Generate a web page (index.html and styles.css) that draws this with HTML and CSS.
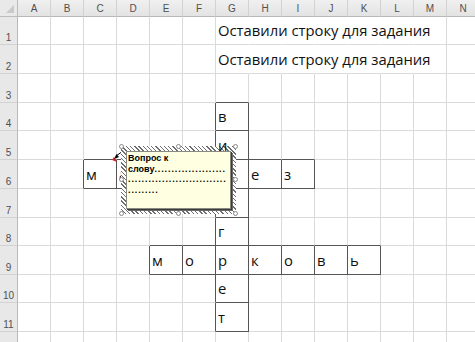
FILE: index.html
```html
<!DOCTYPE html>
<html lang="ru">
<head>
<meta charset="utf-8">
<title>Кроссворд</title>
<link rel="stylesheet" href="styles.css">
</head>
<body>
<div class="sheet">
  <div class="grid">
    <!-- header row -->
    <div class="corner"><span class="tri"></span></div>
    <div class="ch">A</div><div class="ch">B</div><div class="ch">C</div><div class="ch">D</div><div class="ch">E</div><div class="ch">F</div><div class="ch">G</div><div class="ch">H</div><div class="ch">I</div><div class="ch">J</div><div class="ch">K</div><div class="ch">L</div><div class="ch">M</div><div class="ch">N</div>

    <!-- row 1 -->
    <div class="rh">1</div>
    <div class="c"></div><div class="c"></div><div class="c"></div><div class="c"></div><div class="c"></div><div class="c"></div>
    <div class="c over">Оставили строку для задания</div><div class="c nol"></div><div class="c nol"></div><div class="c nol"></div><div class="c nol"></div><div class="c nol"></div><div class="c"></div><div class="c"></div>

    <!-- row 2 -->
    <div class="rh">2</div>
    <div class="c"></div><div class="c"></div><div class="c"></div><div class="c"></div><div class="c"></div><div class="c"></div>
    <div class="c over">Оставили строку для задания</div><div class="c nol"></div><div class="c nol"></div><div class="c nol"></div><div class="c nol"></div><div class="c nol"></div><div class="c"></div><div class="c"></div>

    <!-- row 3 -->
    <div class="rh">3</div>
    <div class="c"></div><div class="c"></div><div class="c"></div><div class="c"></div><div class="c"></div><div class="c"></div>
    <div class="c b"></div><div class="c"></div><div class="c"></div><div class="c"></div><div class="c"></div><div class="c"></div><div class="c"></div><div class="c"></div>

    <!-- row 4 -->
    <div class="rh">4</div>
    <div class="c"></div><div class="c"></div><div class="c"></div><div class="c"></div><div class="c"></div><div class="c r"></div>
    <div class="c r b">в</div><div class="c"></div><div class="c"></div><div class="c"></div><div class="c"></div><div class="c"></div><div class="c"></div><div class="c"></div>

    <!-- row 5 -->
    <div class="rh">5</div>
    <div class="c"></div><div class="c"></div><div class="c b"></div><div class="c b"></div><div class="c b"></div><div class="c r b"></div>
    <div class="c r b top"><span class="lift">и</span></div><div class="c b"></div><div class="c b"></div><div class="c"></div><div class="c"></div><div class="c"></div><div class="c"></div><div class="c"></div>

    <!-- row 6 (cells E6..G6 are hidden under the comment) -->
    <div class="rh">6</div>
    <div class="c"></div><div class="c r"></div><div class="c r b">м</div><div class="c r b">а</div><div class="c r b"></div><div class="c r b"></div>
    <div class="c r b"></div><div class="c r b">е</div><div class="c r b">з</div><div class="c"></div><div class="c"></div><div class="c"></div><div class="c"></div><div class="c"></div>

    <!-- row 7 -->
    <div class="rh">7</div>
    <div class="c"></div><div class="c"></div><div class="c"></div><div class="c"></div><div class="c"></div><div class="c r"></div>
    <div class="c r b"></div><div class="c"></div><div class="c"></div><div class="c"></div><div class="c"></div><div class="c"></div><div class="c"></div><div class="c"></div>

    <!-- row 8 -->
    <div class="rh">8</div>
    <div class="c"></div><div class="c"></div><div class="c"></div><div class="c"></div><div class="c b"></div><div class="c r b"></div>
    <div class="c r b">г</div><div class="c b"></div><div class="c b"></div><div class="c b"></div><div class="c b"></div><div class="c"></div><div class="c"></div><div class="c"></div>

    <!-- row 9 -->
    <div class="rh">9</div>
    <div class="c"></div><div class="c"></div><div class="c"></div><div class="c r"></div><div class="c r b">м</div><div class="c r b">о</div>
    <div class="c r b">р</div><div class="c r b">к</div><div class="c r b">о</div><div class="c r b">в</div><div class="c r b">ь</div><div class="c"></div><div class="c"></div><div class="c"></div>

    <!-- row 10 -->
    <div class="rh">10</div>
    <div class="c"></div><div class="c"></div><div class="c"></div><div class="c"></div><div class="c"></div><div class="c r"></div>
    <div class="c r b">е</div><div class="c"></div><div class="c"></div><div class="c"></div><div class="c"></div><div class="c"></div><div class="c"></div><div class="c"></div>

    <!-- row 11 -->
    <div class="rh">11</div>
    <div class="c"></div><div class="c"></div><div class="c"></div><div class="c"></div><div class="c"></div><div class="c r"></div>
    <div class="c r b">т</div><div class="c"></div><div class="c"></div><div class="c"></div><div class="c"></div><div class="c"></div><div class="c"></div><div class="c"></div>

    <!-- row 12 (partly visible) -->
    <div class="rh"></div>
    <div class="c"></div><div class="c"></div><div class="c"></div><div class="c"></div><div class="c"></div><div class="c"></div>
    <div class="c"></div><div class="c"></div><div class="c"></div><div class="c"></div><div class="c"></div><div class="c"></div><div class="c"></div><div class="c"></div>
  </div>

  <svg class="arrow" width="20" height="20" viewBox="0 0 20 20">
    <polygon points="2,13 7,15 4,10" fill="#e02020"/>
    <line x1="13" y1="4" x2="6" y2="9" stroke="#000" stroke-width="1"/>
    <polygon points="4,12 6.5,7 9,10" fill="#000"/>
  </svg>

  <div class="comment">
    <div class="note">
      <div class="ln">Вопрос к</div>
      <div class="ln">слову<span class="dots">.....................</span></div>
      <div class="ln"><span class="dots">.............................</span></div>
      <div class="ln"><span class="dots">.........</span></div>
    </div>
    <span class="h h-tl"></span><span class="h h-tm"></span><span class="h h-tr"></span>
    <span class="h h-ml"></span><span class="h h-mr"></span>
    <span class="h h-bl"></span><span class="h h-bm"></span><span class="h h-br"></span>
  </div>
</div>
</body>
</html>
```

FILE: styles.css
```css
html, body {
  margin: 0;
  padding: 0;
  background: #ffffff;
}

.sheet {
  position: relative;
  width: 475px;
  height: 342px;
  overflow: hidden;
}

.grid {
  display: grid;
  grid-template-columns: 18px repeat(14, 33px);
  grid-template-rows: 17px 28px 29px 29px 28px 29px 29px 29px 28px 29px 28px 29px 20px;
  font-family: "Open Sans", "Liberation Sans", sans-serif;
}

.corner {
  background: #e9e9e9;
  border-right: 1px solid #bcbcbc;
  border-bottom: 1px solid #bcbcbc;
  box-sizing: border-box;
  position: relative;
}

.tri {
  position: absolute;
  right: 3px;
  bottom: 3px;
  width: 0;
  height: 0;
  border-left: 8px solid transparent;
  border-bottom: 8px solid #c9c9c9;
}

.ch {
  background: linear-gradient(#f0f0f0, #e3e3e3);
  border-right: 1px solid #d2d2d2;
  border-bottom: 1px solid #b8b8b8;
  box-sizing: border-box;
  font-family: "Liberation Sans", sans-serif;
  font-size: 10px;
  color: #505050;
  display: flex;
  align-items: center;
  justify-content: center;
}

.rh {
  background: #e8e8e8;
  border-right: 1px solid #b8b8b8;
  border-bottom: 1px solid #d2d2d2;
  box-sizing: border-box;
  font-family: "Liberation Sans", sans-serif;
  font-size: 10px;
  color: #505050;
  display: flex;
  align-items: flex-end;
  justify-content: center;
  padding-bottom: 1px;
}

.c {
  border-right: 1px solid #dadada;
  border-bottom: 1px solid #dadada;
  box-sizing: border-box;
  font-size: 14.8px;
  color: #111;
  display: flex;
  align-items: center;
  padding-left: 2px;
  padding-bottom: 1px;
  white-space: nowrap;
}

.over {
  overflow: visible;
  position: relative;
  z-index: 1;
  border-right-color: transparent;
}

.top {
  align-items: flex-start;
  padding-top: 4px;
  padding-bottom: 0;
}

.lift {
  position: relative;
  z-index: 2;
}

.nol {
  border-right-color: transparent;
}

.c.r {
  border-right-color: #555555;
}

.c.b {
  border-bottom-color: #555555;
}

.arrow {
  position: absolute;
  left: 110px;
  top: 147px;
}

.comment {
  position: absolute;
  z-index: 1;
  left: 121px;
  top: 146px;
  width: 115px;
  height: 68px;
  box-sizing: border-box;
  padding: 5px;
  background: repeating-linear-gradient(45deg, #6e6e6e 0 1px, #ffffff 1px 3px);
}

.note {
  width: 100%;
  height: 100%;
  box-sizing: border-box;
  background: #ffffe1;
  border: 1px solid #8a8a80;
  box-shadow: 1px 1px 0 #3a3a3a, 2px 2px 0 #6a6a6a;
  padding: 1px 0 0 1px;
  font-family: "Liberation Sans Narrow", "Liberation Sans", sans-serif;
  font-weight: bold;
  font-size: 9px;
  line-height: 10.5px;
  color: #000;
  white-space: nowrap;
  overflow: hidden;
}

.dots {
  letter-spacing: 0.9px;
}

.h {
  position: absolute;
  width: 5px;
  height: 5px;
  border-radius: 50%;
  background: #ffffff;
  border: 1px solid #888888;
  box-sizing: border-box;
}

.h-tl { left: -2px; top: -2px; }
.h-tm { left: 55px; top: -2px; }
.h-tr { right: -2px; top: -2px; }
.h-ml { left: -2px; top: 31px; }
.h-mr { right: -2px; top: 31px; }
.h-bl { left: -2px; bottom: -2px; }
.h-bm { left: 55px; bottom: -2px; }
.h-br { right: -2px; bottom: -2px; }
```
